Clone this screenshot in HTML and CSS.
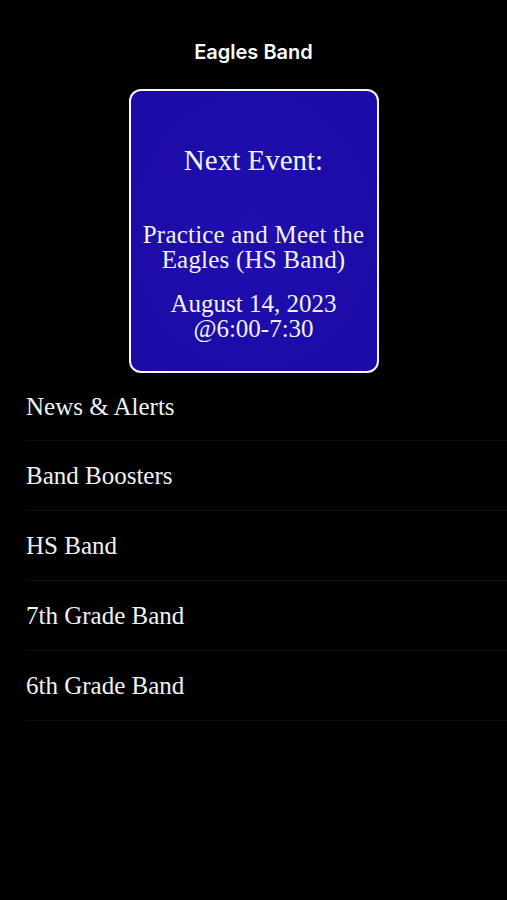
FILE: index.html
```html
<!DOCTYPE html>
<html lang="en">
<head>
  <meta charset="UTF-8" />
  <meta name="viewport" content="width=device-width, initial-scale=1.0"/>
  <title>Eagles Band</title>
  <link rel="stylesheet" href="styles.css">
</head>
<body>

<header>
  <h1>Eagles Band</h1>
</header>

<div class="event-card">
  <p class="event-label">Next Event:</p>
  <p class="event-title">Practice and Meet the Eagles (HS Band)</p>
  <p class="event-date">August 14, 2023<br>@6:00-7:30</p>
</div>

<ul class="menu">
  <li><a href="#">News &amp; Alerts</a></li>
  <li><a href="#">Band Boosters</a></li>
  <li><a href="#">HS Band</a></li>
  <li><a href="#">7th Grade Band</a></li>
  <li><a href="#">6th Grade Band</a></li>
</ul>

</body>
</html>
```

FILE: styles.css
```css
body { font-family: "Liberation Serif", serif; margin: 0; background: #000; color: #f2f2f2; }
header { height: 89px; display: flex; justify-content: center; padding-top: 40px; box-sizing: border-box; }
header h1 { font-family: Inter, "Liberation Sans", sans-serif; font-size: 20px; font-weight: 600; margin: 0; line-height: 24px; color: #fff; }
.event-card { width: 250px; height: 284px; box-sizing: border-box; margin: 0 auto; background: #1d0ca8; background-image: radial-gradient(ellipse at center, #1f0fae 0%, #1b0aa5 100%); border: 2px solid #f4f4f4; border-radius: 12px; text-align: center; padding: 54px 4px 0; }
.event-card p { margin: 0; }
.event-label { font-size: 29px; line-height: 30px; }
.event-title { font-size: 25px; line-height: 25px; margin-top: 47px !important; letter-spacing: 0.2px; }
.event-date { font-size: 25px; line-height: 25px; margin-top: 19px !important; }
.menu { list-style: none; margin: 0; padding: 0 0 0 26px; }
.menu li { height: 69px; border-bottom: 1px solid #0e0e0e; display: flex; align-items: center; }
.menu li:first-child { height: 67px; }
.menu a { color: #f2f2f2; text-decoration: none; font-size: 25px; }
```
